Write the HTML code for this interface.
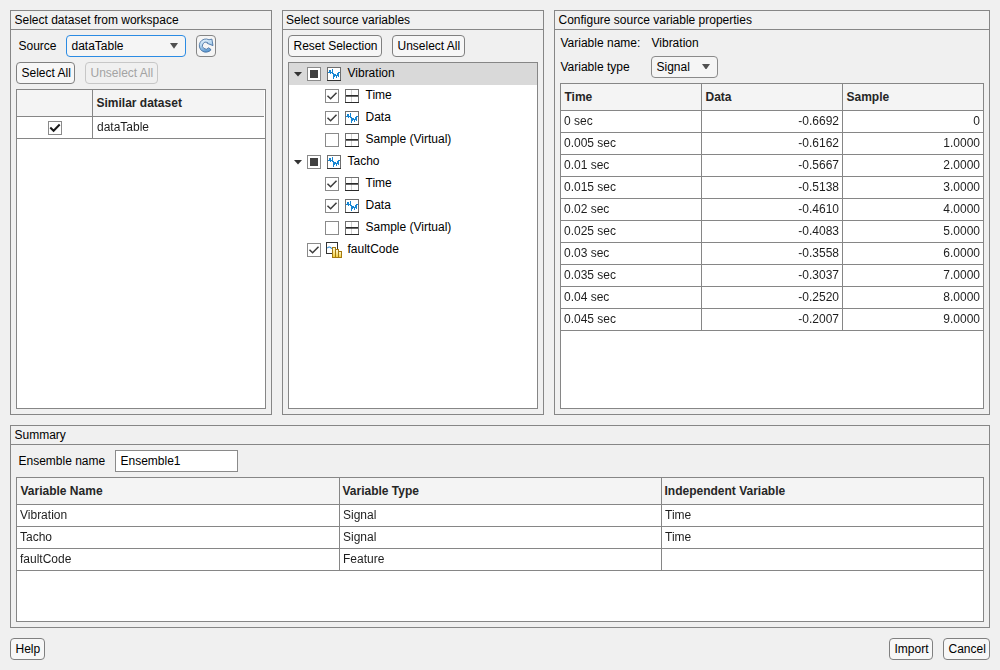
<!DOCTYPE html><html><head><meta charset="utf-8"><style>
html,body{margin:0;padding:0;}
body{width:1000px;height:670px;background:#f0f0f0;position:relative;overflow:hidden;font-family:"Liberation Sans",sans-serif;font-size:12px;color:#000;}
body div, body svg{position:absolute;box-sizing:border-box;}
.t{line-height:14px;white-space:nowrap;}
.b{font-weight:bold;color:#262626;}
.g{will-change:transform;}
</style></head><body>
<div style="left:10px;top:10px;width:262px;height:405px;border:1px solid #868686;"></div>
<div style="left:10px;top:29px;width:262px;height:1px;background:#868686;"></div>
<div class="t" style="left:14.5px;top:13px;">Select dataset from workspace</div>
<div class="t" style="left:18.5px;top:39px;">Source</div>
<div style="left:66px;top:35px;width:120px;height:22px;border:1px solid #2b8be3;border-radius:4px;background:#f5f5f5;"></div>
<div class="t" style="left:71.5px;top:39px;">dataTable</div>
<svg style="left:170.0px;top:43px" width="8" height="5.7" viewBox="0 0 8 5.7"><path d="M0 0 L8 0 L4.0 5.7 Z" fill="#505050"/></svg>
<div style="left:196px;top:35px;width:20px;height:22px;border:1px solid #858585;border-radius:4px;background:#f5f5f5;"></div>
<svg style="left:196px;top:35px" width="20" height="22" viewBox="0 0 20 22"><defs><linearGradient id="rg" x1="0" y1="0" x2="0.3" y2="1"><stop offset="0" stop-color="#f0f8fe"/><stop offset="0.5" stop-color="#b5d6f0"/><stop offset="1" stop-color="#5f9bd2"/></linearGradient></defs><path d="M13.0 4.77 A6.6 6.6 0 1 0 15.1 14.66 L12.66 12.75 A3.5 3.5 0 1 1 11.54 7.51 L11.3 8.4 L17.0 10.6 L15.9 4.1 Z" fill="url(#rg)" stroke="#3a679a" stroke-width="0.8" stroke-linejoin="round"/></svg>
<div style="left:16px;top:62px;width:59px;height:22px;border:1px solid #808080;border-radius:4px;background:#f7f7f7;"></div>
<div class="t" style="left:21.5px;top:66px;">Select All</div>
<div style="left:85px;top:62px;width:73px;height:22px;border:1px solid #c7c7c7;border-radius:4px;background:#f0f0f0;"></div>
<div class="t" style="left:90.5px;top:66px;color:#a3a3a3;">Unselect All</div>
<div style="left:16px;top:89px;width:250px;height:320px;border:1px solid #868686;background:#fff;"></div>
<div style="left:17px;top:90px;width:247px;height:26px;background:#f4f4f4;"></div>
<div style="left:16px;top:116px;width:248px;height:1px;background:#868686;"></div>
<div style="left:92px;top:89px;width:1px;height:50px;background:#868686;"></div>
<div style="left:16px;top:138px;width:250px;height:1px;background:#868686;"></div>
<div class="t b" style="left:96.5px;top:96px;">Similar dataset</div>
<div style="left:48px;top:121px;width:14px;height:14px;border:1px solid #8a8a8a;background:#fff;"></div>
<svg style="left:48px;top:121px" width="14" height="14" viewBox="0 0 14 14"><path d="M3 7.2 L5.6 9.8 L11 4.2" fill="none" stroke="#1a1a1a" stroke-width="2" stroke-linecap="square"/></svg>
<div class="t g" style="left:96.5px;top:120px;color:#1e1e1e;">dataTable</div>
<div style="left:282px;top:10px;width:262px;height:405px;border:1px solid #868686;"></div>
<div style="left:282px;top:29px;width:262px;height:1px;background:#868686;"></div>
<div class="t" style="left:286px;top:13px;">Select source variables</div>
<div style="left:288px;top:35px;width:94px;height:22px;border:1px solid #808080;border-radius:4px;background:#f7f7f7;"></div>
<div class="t" style="left:293.5px;top:39px;">Reset Selection</div>
<div style="left:392px;top:35px;width:73px;height:22px;border:1px solid #808080;border-radius:4px;background:#f7f7f7;"></div>
<div class="t" style="left:397.5px;top:39px;">Unselect All</div>
<div style="left:288px;top:62px;width:250px;height:347px;border:1px solid #868686;background:#fff;"></div>
<div style="left:289px;top:63px;width:248px;height:22px;background:#d9d9d9;"></div>
<svg style="left:294.0px;top:72px" width="8" height="4.5" viewBox="0 0 8 4.5"><path d="M0 0 L8 0 L4.0 4.5 Z" fill="#333"/></svg>
<div style="left:307px;top:67px;width:14px;height:14px;border:1px solid #8a8a8a;background:#fff;"></div>
<div style="left:310px;top:70px;width:8px;height:8px;background:#404040;"></div>
<svg style="left:327px;top:67px" width="14" height="14" viewBox="0 0 14 14" shape-rendering="crispEdges"><rect x="0.5" y="0.5" width="13" height="13" fill="#fff" stroke="#6e6e6e"/><rect x="0" y="13" width="14" height="1" fill="#333"/><g fill="#1585d2"><rect x="1" y="5" width="1" height="1"/><rect x="2" y="3" width="1" height="3"/><rect x="3" y="3" width="1" height="4"/><rect x="4" y="5" width="1" height="1"/><rect x="5" y="2" width="1" height="5"/><rect x="6" y="6" width="1" height="6"/><rect x="7" y="7" width="1" height="3"/><rect x="8" y="7" width="1" height="2"/><rect x="9" y="8" width="1" height="3"/><rect x="10" y="6" width="1" height="3"/><rect x="11" y="5" width="1" height="5"/><rect x="12" y="5" width="1" height="1"/></g></svg>
<div class="t" style="left:347.5px;top:66px;">Vibration</div>
<div style="left:325px;top:89px;width:14px;height:14px;border:1px solid #8a8a8a;background:#fff;"></div>
<svg style="left:325px;top:89px" width="14" height="14" viewBox="0 0 14 14"><path d="M3 7.2 L5.6 9.8 L11 4.2" fill="none" stroke="#3c3c3c" stroke-width="1.5" stroke-linecap="square"/></svg>
<svg style="left:345px;top:89px" width="14" height="14" viewBox="0 0 14 14"><rect x="0.5" y="0.5" width="13" height="13" fill="#fff" stroke="#707070"/><rect x="0" y="13" width="14" height="1" fill="#2a2a2a"/><rect x="6" y="1" width="1" height="12" fill="#cfcfcf"/><rect x="1" y="6" width="12" height="1.7" fill="#2b2b2b"/></svg>
<div class="t" style="left:365.5px;top:88px;">Time</div>
<div style="left:325px;top:111px;width:14px;height:14px;border:1px solid #8a8a8a;background:#fff;"></div>
<svg style="left:325px;top:111px" width="14" height="14" viewBox="0 0 14 14"><path d="M3 7.2 L5.6 9.8 L11 4.2" fill="none" stroke="#3c3c3c" stroke-width="1.5" stroke-linecap="square"/></svg>
<svg style="left:345px;top:111px" width="14" height="14" viewBox="0 0 14 14" shape-rendering="crispEdges"><rect x="0.5" y="0.5" width="13" height="13" fill="#fff" stroke="#6e6e6e"/><rect x="0" y="13" width="14" height="1" fill="#333"/><g fill="#1585d2"><rect x="1" y="5" width="1" height="1"/><rect x="2" y="3" width="1" height="3"/><rect x="3" y="3" width="1" height="4"/><rect x="4" y="5" width="1" height="1"/><rect x="5" y="2" width="1" height="5"/><rect x="6" y="6" width="1" height="6"/><rect x="7" y="7" width="1" height="3"/><rect x="8" y="7" width="1" height="2"/><rect x="9" y="8" width="1" height="3"/><rect x="10" y="6" width="1" height="3"/><rect x="11" y="5" width="1" height="5"/><rect x="12" y="5" width="1" height="1"/></g></svg>
<div class="t" style="left:365.5px;top:110px;">Data</div>
<div style="left:325px;top:133px;width:14px;height:14px;border:1px solid #8a8a8a;background:#fff;"></div>
<svg style="left:345px;top:133px" width="14" height="14" viewBox="0 0 14 14"><rect x="0.5" y="0.5" width="13" height="13" fill="#fff" stroke="#707070"/><rect x="0" y="13" width="14" height="1" fill="#2a2a2a"/><rect x="6" y="1" width="1" height="12" fill="#cfcfcf"/><rect x="1" y="6" width="12" height="1.7" fill="#2b2b2b"/></svg>
<div class="t" style="left:365.5px;top:132px;">Sample (Virtual)</div>
<svg style="left:294.0px;top:160px" width="8" height="4.5" viewBox="0 0 8 4.5"><path d="M0 0 L8 0 L4.0 4.5 Z" fill="#333"/></svg>
<div style="left:307px;top:155px;width:14px;height:14px;border:1px solid #8a8a8a;background:#fff;"></div>
<div style="left:310px;top:158px;width:8px;height:8px;background:#404040;"></div>
<svg style="left:327px;top:155px" width="14" height="14" viewBox="0 0 14 14" shape-rendering="crispEdges"><rect x="0.5" y="0.5" width="13" height="13" fill="#fff" stroke="#6e6e6e"/><rect x="0" y="13" width="14" height="1" fill="#333"/><g fill="#1585d2"><rect x="1" y="5" width="1" height="1"/><rect x="2" y="3" width="1" height="3"/><rect x="3" y="3" width="1" height="4"/><rect x="4" y="5" width="1" height="1"/><rect x="5" y="2" width="1" height="5"/><rect x="6" y="6" width="1" height="6"/><rect x="7" y="7" width="1" height="3"/><rect x="8" y="7" width="1" height="2"/><rect x="9" y="8" width="1" height="3"/><rect x="10" y="6" width="1" height="3"/><rect x="11" y="5" width="1" height="5"/><rect x="12" y="5" width="1" height="1"/></g></svg>
<div class="t" style="left:347.5px;top:154px;">Tacho</div>
<div style="left:325px;top:177px;width:14px;height:14px;border:1px solid #8a8a8a;background:#fff;"></div>
<svg style="left:325px;top:177px" width="14" height="14" viewBox="0 0 14 14"><path d="M3 7.2 L5.6 9.8 L11 4.2" fill="none" stroke="#3c3c3c" stroke-width="1.5" stroke-linecap="square"/></svg>
<svg style="left:345px;top:177px" width="14" height="14" viewBox="0 0 14 14"><rect x="0.5" y="0.5" width="13" height="13" fill="#fff" stroke="#707070"/><rect x="0" y="13" width="14" height="1" fill="#2a2a2a"/><rect x="6" y="1" width="1" height="12" fill="#cfcfcf"/><rect x="1" y="6" width="12" height="1.7" fill="#2b2b2b"/></svg>
<div class="t" style="left:365.5px;top:176px;">Time</div>
<div style="left:325px;top:199px;width:14px;height:14px;border:1px solid #8a8a8a;background:#fff;"></div>
<svg style="left:325px;top:199px" width="14" height="14" viewBox="0 0 14 14"><path d="M3 7.2 L5.6 9.8 L11 4.2" fill="none" stroke="#3c3c3c" stroke-width="1.5" stroke-linecap="square"/></svg>
<svg style="left:345px;top:199px" width="14" height="14" viewBox="0 0 14 14" shape-rendering="crispEdges"><rect x="0.5" y="0.5" width="13" height="13" fill="#fff" stroke="#6e6e6e"/><rect x="0" y="13" width="14" height="1" fill="#333"/><g fill="#1585d2"><rect x="1" y="5" width="1" height="1"/><rect x="2" y="3" width="1" height="3"/><rect x="3" y="3" width="1" height="4"/><rect x="4" y="5" width="1" height="1"/><rect x="5" y="2" width="1" height="5"/><rect x="6" y="6" width="1" height="6"/><rect x="7" y="7" width="1" height="3"/><rect x="8" y="7" width="1" height="2"/><rect x="9" y="8" width="1" height="3"/><rect x="10" y="6" width="1" height="3"/><rect x="11" y="5" width="1" height="5"/><rect x="12" y="5" width="1" height="1"/></g></svg>
<div class="t" style="left:365.5px;top:198px;">Data</div>
<div style="left:325px;top:221px;width:14px;height:14px;border:1px solid #8a8a8a;background:#fff;"></div>
<svg style="left:345px;top:221px" width="14" height="14" viewBox="0 0 14 14"><rect x="0.5" y="0.5" width="13" height="13" fill="#fff" stroke="#707070"/><rect x="0" y="13" width="14" height="1" fill="#2a2a2a"/><rect x="6" y="1" width="1" height="12" fill="#cfcfcf"/><rect x="1" y="6" width="12" height="1.7" fill="#2b2b2b"/></svg>
<div class="t" style="left:365.5px;top:220px;">Sample (Virtual)</div>
<div style="left:307px;top:243px;width:14px;height:14px;border:1px solid #8a8a8a;background:#fff;"></div>
<svg style="left:307px;top:243px" width="14" height="14" viewBox="0 0 14 14"><path d="M3 7.2 L5.6 9.8 L11 4.2" fill="none" stroke="#3c3c3c" stroke-width="1.5" stroke-linecap="square"/></svg>
<svg style="left:326px;top:242px" width="17" height="17" viewBox="0 0 17 17"><defs><linearGradient id="gb" x1="0" y1="0" x2="0" y2="1"><stop offset="0" stop-color="#fffbe0"/><stop offset="1" stop-color="#f2cf3a"/></linearGradient></defs><rect x="0.5" y="0.5" width="11" height="11" fill="#fff" stroke="#333"/><path d="M1.3 6.2 Q3.5 3.6 5.8 6.8" fill="none" stroke="#2a86d0" stroke-width="1.1"/><rect x="6.5" y="5.5" width="3" height="10" fill="url(#gb)" stroke="#a47a10"/><rect x="9.5" y="7.5" width="3" height="8" fill="url(#gb)" stroke="#a47a10"/><rect x="12.5" y="9.5" width="3" height="6" fill="url(#gb)" stroke="#a47a10"/></svg>
<div class="t" style="left:347.5px;top:242px;">faultCode</div>
<div style="left:554px;top:10px;width:436px;height:405px;border:1px solid #868686;"></div>
<div style="left:554px;top:29px;width:436px;height:1px;background:#868686;"></div>
<div class="t" style="left:558.5px;top:13px;">Configure source variable properties</div>
<div class="t" style="left:560.5px;top:36px;">Variable name:</div>
<div class="t" style="left:651.5px;top:36px;">Vibration</div>
<div class="t" style="left:560.5px;top:60px;">Variable type</div>
<div style="left:651px;top:56px;width:67px;height:22px;border:1px solid #8a8a8a;border-radius:4px;background:#f5f5f5;"></div>
<div class="t" style="left:656.5px;top:60px;">Signal</div>
<svg style="left:702.0px;top:63.8px" width="8" height="5.7" viewBox="0 0 8 5.7"><path d="M0 0 L8 0 L4.0 5.7 Z" fill="#505050"/></svg>
<div style="left:560px;top:83px;width:424px;height:326px;border:1px solid #868686;background:#fff;"></div>
<div style="left:561px;top:84px;width:422px;height:26px;background:#f4f4f4;"></div>
<div style="left:560px;top:110px;width:424px;height:1px;background:#868686;"></div>
<div style="left:701px;top:83px;width:1px;height:248px;background:#868686;"></div>
<div style="left:842px;top:83px;width:1px;height:248px;background:#868686;"></div>
<div class="t b" style="left:564.5px;top:90px;">Time</div>
<div class="t b" style="left:705.5px;top:90px;">Data</div>
<div class="t b" style="left:846.5px;top:90px;">Sample</div>
<div style="left:560px;top:132px;width:424px;height:1px;background:#868686;"></div>
<div class="t g" style="left:564px;top:114px;color:#1e1e1e;">0 sec</div>
<div class="t g" style="left:702.5px;width:136px;text-align:right;top:114px;color:#1e1e1e;">-0.6692</div>
<div class="t g" style="left:843.7px;width:136px;text-align:right;top:114px;color:#1e1e1e;">0</div>
<div style="left:560px;top:154px;width:424px;height:1px;background:#868686;"></div>
<div class="t g" style="left:564px;top:136px;color:#1e1e1e;">0.005 sec</div>
<div class="t g" style="left:702.5px;width:136px;text-align:right;top:136px;color:#1e1e1e;">-0.6162</div>
<div class="t g" style="left:843.7px;width:136px;text-align:right;top:136px;color:#1e1e1e;">1.0000</div>
<div style="left:560px;top:176px;width:424px;height:1px;background:#868686;"></div>
<div class="t g" style="left:564px;top:158px;color:#1e1e1e;">0.01 sec</div>
<div class="t g" style="left:702.5px;width:136px;text-align:right;top:158px;color:#1e1e1e;">-0.5667</div>
<div class="t g" style="left:843.7px;width:136px;text-align:right;top:158px;color:#1e1e1e;">2.0000</div>
<div style="left:560px;top:198px;width:424px;height:1px;background:#868686;"></div>
<div class="t g" style="left:564px;top:180px;color:#1e1e1e;">0.015 sec</div>
<div class="t g" style="left:702.5px;width:136px;text-align:right;top:180px;color:#1e1e1e;">-0.5138</div>
<div class="t g" style="left:843.7px;width:136px;text-align:right;top:180px;color:#1e1e1e;">3.0000</div>
<div style="left:560px;top:220px;width:424px;height:1px;background:#868686;"></div>
<div class="t g" style="left:564px;top:202px;color:#1e1e1e;">0.02 sec</div>
<div class="t g" style="left:702.5px;width:136px;text-align:right;top:202px;color:#1e1e1e;">-0.4610</div>
<div class="t g" style="left:843.7px;width:136px;text-align:right;top:202px;color:#1e1e1e;">4.0000</div>
<div style="left:560px;top:242px;width:424px;height:1px;background:#868686;"></div>
<div class="t g" style="left:564px;top:224px;color:#1e1e1e;">0.025 sec</div>
<div class="t g" style="left:702.5px;width:136px;text-align:right;top:224px;color:#1e1e1e;">-0.4083</div>
<div class="t g" style="left:843.7px;width:136px;text-align:right;top:224px;color:#1e1e1e;">5.0000</div>
<div style="left:560px;top:264px;width:424px;height:1px;background:#868686;"></div>
<div class="t g" style="left:564px;top:246px;color:#1e1e1e;">0.03 sec</div>
<div class="t g" style="left:702.5px;width:136px;text-align:right;top:246px;color:#1e1e1e;">-0.3558</div>
<div class="t g" style="left:843.7px;width:136px;text-align:right;top:246px;color:#1e1e1e;">6.0000</div>
<div style="left:560px;top:286px;width:424px;height:1px;background:#868686;"></div>
<div class="t g" style="left:564px;top:268px;color:#1e1e1e;">0.035 sec</div>
<div class="t g" style="left:702.5px;width:136px;text-align:right;top:268px;color:#1e1e1e;">-0.3037</div>
<div class="t g" style="left:843.7px;width:136px;text-align:right;top:268px;color:#1e1e1e;">7.0000</div>
<div style="left:560px;top:308px;width:424px;height:1px;background:#868686;"></div>
<div class="t g" style="left:564px;top:290px;color:#1e1e1e;">0.04 sec</div>
<div class="t g" style="left:702.5px;width:136px;text-align:right;top:290px;color:#1e1e1e;">-0.2520</div>
<div class="t g" style="left:843.7px;width:136px;text-align:right;top:290px;color:#1e1e1e;">8.0000</div>
<div style="left:560px;top:330px;width:424px;height:1px;background:#868686;"></div>
<div class="t g" style="left:564px;top:312px;color:#1e1e1e;">0.045 sec</div>
<div class="t g" style="left:702.5px;width:136px;text-align:right;top:312px;color:#1e1e1e;">-0.2007</div>
<div class="t g" style="left:843.7px;width:136px;text-align:right;top:312px;color:#1e1e1e;">9.0000</div>
<div style="left:10px;top:425px;width:980px;height:203px;border:1px solid #868686;"></div>
<div style="left:10px;top:444px;width:980px;height:1px;background:#868686;"></div>
<div class="t" style="left:14.5px;top:428px;">Summary</div>
<div class="t" style="left:18.5px;top:454px;">Ensemble name</div>
<div style="left:115px;top:450px;width:123px;height:22px;border:1px solid #8a8a8a;background:#fff;"></div>
<div class="t" style="left:120.5px;top:454px;">Ensemble1</div>
<div style="left:16px;top:477px;width:968px;height:145px;border:1px solid #868686;background:#fff;"></div>
<div style="left:17px;top:478px;width:966px;height:26px;background:#f4f4f4;"></div>
<div style="left:16px;top:504px;width:968px;height:1px;background:#868686;"></div>
<div style="left:339px;top:477px;width:1px;height:94px;background:#868686;"></div>
<div style="left:661px;top:477px;width:1px;height:94px;background:#868686;"></div>
<div class="t b" style="left:20.5px;top:484px;">Variable Name</div>
<div class="t b" style="left:342.5px;top:484px;">Variable Type</div>
<div class="t b" style="left:664.5px;top:484px;">Independent Variable</div>
<div style="left:16px;top:526px;width:968px;height:1px;background:#868686;"></div>
<div class="t g" style="left:20px;top:508px;color:#1e1e1e;">Vibration</div>
<div class="t g" style="left:342.5px;top:508px;color:#1e1e1e;">Signal</div>
<div class="t g" style="left:664.5px;top:508px;color:#1e1e1e;">Time</div>
<div style="left:16px;top:548px;width:968px;height:1px;background:#868686;"></div>
<div class="t g" style="left:20px;top:530px;color:#1e1e1e;">Tacho</div>
<div class="t g" style="left:342.5px;top:530px;color:#1e1e1e;">Signal</div>
<div class="t g" style="left:664.5px;top:530px;color:#1e1e1e;">Time</div>
<div style="left:16px;top:570px;width:968px;height:1px;background:#868686;"></div>
<div class="t g" style="left:20px;top:552px;color:#1e1e1e;">faultCode</div>
<div class="t g" style="left:342.5px;top:552px;color:#1e1e1e;">Feature</div>
<div style="left:10px;top:638px;width:35px;height:22px;border:1px solid #808080;border-radius:4px;background:#f7f7f7;"></div>
<div class="t" style="left:15.5px;top:642px;">Help</div>
<div style="left:889px;top:638px;width:44px;height:22px;border:1px solid #808080;border-radius:4px;background:#f7f7f7;"></div>
<div class="t" style="left:894.5px;top:642px;">Import</div>
<div style="left:943px;top:638px;width:47px;height:22px;border:1px solid #808080;border-radius:4px;background:#f7f7f7;"></div>
<div class="t" style="left:948.5px;top:642px;">Cancel</div>
</body></html>
